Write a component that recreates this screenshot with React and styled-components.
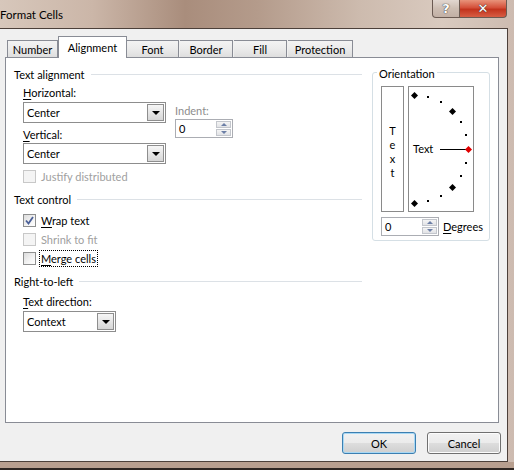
import React from "react"
import styled, { createGlobalStyle } from "styled-components"

const GlobalStyle = createGlobalStyle`
  html, body {
    margin: 0;
    padding: 0;
    background: #fff;
  }
  body {
    font-family: Lato, "Noto Sans", sans-serif;
    font-size: 11px;
    color: #000;
  }
`

const Window = styled.div`
  width: 514px;
  height: 470px;
  overflow: hidden;
  display: flex;
  flex-direction: column;
  background: linear-gradient(
    90deg,
    #d7c7bb 0%,
    #cbb6a8 18%,
    #a98d7c 36%,
    #b49b8b 50%,
    #cdbbae 70%,
    #d9cabf 86%,
    #cdbbb0 100%
  );
`

const TitleBar = styled.div`
  height: 28px;
  flex: none;
  display: flex;
  align-items: flex-start;
`

const Title = styled.div`
  margin-top: 7px;
  font-size: 11.5px;
  line-height: 15px;
  color: #000;
`

const CaptionButtons = styled.div`
  margin-left: auto;
  margin-right: 7px;
  display: flex;
  height: 18px;
`

const CaptionButton = styled.div`
  width: ${p => p.$w}px;
  height: 18px;
  box-sizing: border-box;
  border: 1px solid #6b5a52;
  border-top: none;
  display: flex;
  align-items: center;
  justify-content: center;
  font-family: "DejaVu Sans", sans-serif;
  font-weight: bold;
  font-size: 13px;
  color: #fff;
  text-shadow: 0 0 1px #333, 0 0 1px #333;
  background: ${p =>
    p.$close
      ? "linear-gradient(180deg, #e8937b 0%, #d4503a 45%, #c2331d 55%, #d75d44 100%)"
      : "linear-gradient(180deg, #e2d7d0 0%, #cdbdb2 50%, #c2b0a5 100%)"};
  border-radius: ${p => (p.$close ? "0 0 4px 0" : "0 0 0 4px")};
  border-left: ${p => (p.$close ? "none" : "1px solid #6b5a52")};
`

const Client = styled.div`
  height: 434px;
  margin-right: 6px;
  flex: none;
  background: #f0f0f0;
  border-top: 1px solid #4c403a;
  border-right: 1px solid #4c403a;
  border-bottom: 1px solid #4c403a;
  box-sizing: border-box;
  display: flex;
  flex-direction: column;
`

const BottomFrame = styled.div`
  flex: 1;
  background: #b89f8f;
  border-bottom: 2px solid #2e2622;
`

const TabStrip = styled.div`
  display: flex;
  align-items: flex-end;
  height: 21px;
  margin-top: 7px;
  padding-left: 7px;
  position: relative;
  z-index: 1;
`

const Tab = styled.div`
  box-sizing: border-box;
  width: ${p => p.$w}px;
  margin-right: ${p => p.$gap || 0}px;
  height: ${p => (p.$active ? 22 : 17)}px;
  margin-bottom: ${p => (p.$active ? -1 : 0)}px;
  border: 1px solid #898c95;
  border-bottom: none;
  border-left: ${p => (p.$first || p.$active ? "1px solid #898c95" : "none")};
  background: ${p =>
    p.$active ? "#fff" : "linear-gradient(180deg, #f3f3f3 0%, #ebebeb 50%, #dedede 100%)"};
  display: flex;
  justify-content: center;
  padding-top: ${p => (p.$active ? 3 : 1)}px;
  line-height: 15px;
`

const Panel = styled.div`
  margin-left: 5px;
  width: 494px;
  height: 366px;
  box-sizing: border-box;
  border: 1px solid #898c95;
  background: #fff;
  display: flex;
  align-items: flex-start;
`

const LeftColumn = styled.div`
  width: 356px;
  padding-left: 8px;
  box-sizing: border-box;
  display: flex;
  flex-direction: column;
  padding-top: 9px;
`

const SectionHeader = styled.div`
  display: flex;
  align-items: center;
  gap: 6px;
  height: 15px;
  margin-top: ${p => p.$mt || 0}px;
  white-space: nowrap;

  &::after {
    content: "";
    flex: 1;
    height: 1px;
    background: #dce1e6;
  }
`

const Field = styled.div`
  padding-left: 9px;
  display: flex;
  flex-direction: column;
`

const Label = styled.div`
  height: 15px;
  line-height: 15px;
  margin-top: ${p => p.$mt || 0}px;
  color: ${p => (p.$disabled ? "#8d8d8d" : "#000")};
`

const U = styled.span`
  text-decoration: underline;
  text-underline-offset: 2px;
`

const AlignRow = styled.div`
  display: flex;
`

const Selects = styled.div`
  display: flex;
  flex-direction: column;
`

const IndentColumn = styled.div`
  margin-left: 9px;
  padding-top: 21px;
  display: flex;
  flex-direction: column;
`

const Select = styled.div`
  width: ${p => p.$w}px;
  height: 21px;
  margin-top: ${p => p.$mt || 0}px;
  box-sizing: border-box;
  border: 1px solid #8d8d8d;
  background: #fff;
  display: flex;
  align-items: stretch;
`

const SelectText = styled.div`
  flex: 1;
  padding-left: 3px;
  line-height: 19px;
`

const DropButton = styled.div`
  width: 17px;
  margin: 1px;
  box-sizing: border-box;
  border: 1px solid #8e8e8e;
  background: linear-gradient(180deg, #f6f6f6 0%, #e6e6e6 50%, #d6d6d6 100%);
  display: flex;
  align-items: center;
  justify-content: center;

  &::before {
    content: "";
    border-left: 4px solid transparent;
    border-right: 4px solid transparent;
    border-top: 4px solid #000;
  }
`

const Spin = styled.div`
  width: 58px;
  height: 19px;
  margin-top: ${p => p.$mt || 0}px;
  box-sizing: border-box;
  border: 1px solid #abadb3;
  background: #fff;
  display: flex;
`

const SpinText = styled.div`
  flex: 1;
  padding-left: 3px;
  line-height: 17px;
`

const SpinButtons = styled.div`
  width: 15px;
  display: flex;
  flex-direction: column;
  gap: 1px;
  padding: 1px 1px 1px 0;
`

const SpinArrow = styled.div`
  flex: 1;
  box-sizing: border-box;
  border: 1px solid #c3c6cc;
  background: linear-gradient(180deg, #f4f4f4, #e2e3e6);
  display: flex;
  align-items: center;
  justify-content: center;

  &::before {
    content: "";
    border-left: 3px solid transparent;
    border-right: 3px solid transparent;
    ${p =>
      p.$up ? "border-bottom: 3px solid #6c7fa6;" : "border-top: 3px solid #6c7fa6;"}
  }
`

const CheckRow = styled.div`
  display: flex;
  align-items: center;
  gap: 4px;
  height: 15px;
  margin-top: ${p => p.$mt || 0}px;
  padding-left: 9px;
  color: ${p => (p.$disabled ? "#a0a0a0" : "#000")};
`

const Box = styled.div`
  width: 13px;
  height: 13px;
  box-sizing: border-box;
  border: 1px solid ${p => (p.$disabled ? "#c8c8c8" : "#8e8f8f")};
  background: ${p =>
    p.$disabled ? "#f4f4f4" : "linear-gradient(135deg, #dcdcdc 0%, #f4f4f4 60%, #ffffff 100%)"};
  display: flex;
  align-items: center;
  justify-content: center;
`

const CheckText = styled.span`
  padding: 0 1px;
  line-height: 15px;
  outline: ${p => (p.$focus ? "1px dotted #000" : "none")};
  outline-offset: 0;
`

const Orientation = styled.div`
  position: relative;
  margin-left: 10px;
  margin-top: 14px;
  width: 118px;
  height: 169px;
  box-sizing: border-box;
  border: 1px solid #d5dfe5;
  border-radius: 3px;
  padding: 13px 0 0 8px;
`

const Legend = styled.div`
  position: absolute;
  top: -7px;
  left: 4px;
  padding: 0 2px;
  background: #fff;
  line-height: 15px;
`

const OrientRow = styled.div`
  display: flex;
  gap: 4px;
`

const VerticalBox = styled.div`
  width: 23px;
  height: 126px;
  box-sizing: border-box;
  border: 1px solid #8a8a8a;
  display: flex;
  flex-direction: column;
  align-items: center;
  justify-content: center;
  padding-top: 5px;
  line-height: 14px;
`

const Dial = styled.div`
  position: relative;
  width: 66px;
  height: 126px;
  box-sizing: border-box;
  border: 1px solid #8a8a8a;

  svg {
    display: block;
  }
`

const DialLabel = styled.span`
  position: absolute;
  left: 4px;
  top: 54px;
  line-height: 15px;
`

const DegreesRow = styled.div`
  display: flex;
  align-items: center;
  gap: 4px;
  margin-top: 5px;
`

const Footer = styled.div`
  display: flex;
  justify-content: flex-end;
  gap: 11px;
  padding-right: 6px;
  margin-top: 9px;
`

const Button = styled.div`
  width: 74px;
  height: 22px;
  box-sizing: border-box;
  border-radius: 3px;
  border: 1px solid ${p => (p.$default ? "#3c7fb1" : "#707070")};
  box-shadow: ${p => (p.$default ? "inset 0 0 0 1px #a8d8f4" : "inset 0 0 0 1px #fcfcfc")};
  background: linear-gradient(180deg, #f2f2f2 0%, #ebebeb 48%, #dddddd 52%, #cfcfcf 100%);
  display: flex;
  align-items: center;
  justify-content: center;
`

function Diamond({ x, y, s = 3.5, fill = "#000" }) {
  return <polygon points={`${x},${y - s} ${x + s},${y} ${x},${y + s} ${x - s},${y}`} fill={fill} />
}

function DialDrawing() {
  const cx = 5
  const cy = 62
  const r = 54
  const small = [75, 60, 30, 15, -15, -30, -60, -75]
  const big = [90, 45, -45, -90]
  const pt = a => [cx + r * Math.cos((a * Math.PI) / 180), cy - r * Math.sin((a * Math.PI) / 180)]
  return (
    <svg width="64" height="124" viewBox="0 0 64 124">
      {small.map(a => {
        const [x, y] = pt(a)
        return <rect key={a} x={Math.round(x) - 1} y={Math.round(y) - 1} width="2" height="2" fill="#000" />
      })}
      {big.map(a => {
        const [x, y] = pt(a)
        return <Diamond key={a} x={Math.round(x) + 0.5} y={Math.round(y) + 0.5} />
      })}
      <line x1="31" y1="62.5" x2="57" y2="62.5" stroke="#000" strokeWidth="1" />
      <Diamond x={59.5} y={62.5} fill="#e00000" />
    </svg>
  )
}

function SpinBox({ value, mt }) {
  return (
    <Spin $mt={mt}>
      <SpinText>{value}</SpinText>
      <SpinButtons>
        <SpinArrow $up />
        <SpinArrow />
      </SpinButtons>
    </Spin>
  )
}

function Dropdown({ value, w, mt }) {
  return (
    <Select $w={w} $mt={mt}>
      <SelectText>{value}</SelectText>
      <DropButton />
    </Select>
  )
}

function Check({ checked, disabled, focus, mt, children }) {
  return (
    <CheckRow $mt={mt} $disabled={disabled}>
      <Box $disabled={disabled}>
        {checked && (
          <svg width="9" height="9" viewBox="0 0 9 9">
            <path d="M1 4.5 L3.5 7.5 L8 1" fill="none" stroke="#4a5f97" strokeWidth="1.8" />
          </svg>
        )}
      </Box>
      <CheckText $focus={focus}>{children}</CheckText>
    </CheckRow>
  )
}

const tabs = [
  { name: "Number", w: 51, first: true },
  { name: "Alignment", w: 69, active: true },
  { name: "Font", w: 52, gap: 1 },
  { name: "Border", w: 53, gap: 1 },
  { name: "Fill", w: 53, gap: 1 },
  { name: "Protection", w: 65 },
]

export default function App() {
  return (
    <>
      <GlobalStyle />
      <Window>
        <TitleBar>
          <Title>Format Cells</Title>
          <CaptionButtons>
            <CaptionButton $w={28}>?</CaptionButton>
            <CaptionButton $w={47} $close>✕</CaptionButton>
          </CaptionButtons>
        </TitleBar>
        <Client>
          <TabStrip>
            {tabs.map(t => (
              <Tab key={t.name} $w={t.w} $gap={t.gap} $active={t.active} $first={t.first}>
                {t.name}
              </Tab>
            ))}
          </TabStrip>
          <Panel>
            <LeftColumn>
              <SectionHeader>Text alignment</SectionHeader>
              <Field>
                <AlignRow>
                  <Selects>
                    <Label $mt={3}>
                      <U>H</U>orizontal:
                    </Label>
                    <Dropdown value="Center" w={143} mt={2} />
                    <Label $mt={4}>
                      <U>V</U>ertical:
                    </Label>
                    <Dropdown value="Center" w={143} mt={1} />
                  </Selects>
                  <IndentColumn>
                    <Label $disabled>Indent:</Label>
                    <SpinBox value="0" mt={1} />
                  </IndentColumn>
                </AlignRow>
              </Field>
              <Check disabled mt={5}>
                Justify distributed
              </Check>
              <SectionHeader $mt={8}>Text control</SectionHeader>
              <Check checked mt={6}>
                <U>W</U>rap text
              </Check>
              <Check disabled mt={4}>
                Shrink to fit
              </Check>
              <Check focus mt={4}>
                <U>M</U>erge cells
              </Check>
              <SectionHeader $mt={8}>Right-to-left</SectionHeader>
              <Field>
                <Label $mt={5}>
                  <U>T</U>ext direction:
                </Label>
                <Dropdown value="Context" w={93} mt={2} />
              </Field>
            </LeftColumn>
            <Orientation>
              <Legend>Orientation</Legend>
              <OrientRow>
                <VerticalBox>
                  <span>T</span>
                  <span>e</span>
                  <span>x</span>
                  <span>t</span>
                </VerticalBox>
                <Dial>
                  <DialDrawing />
                  <DialLabel>Text</DialLabel>
                </Dial>
              </OrientRow>
              <DegreesRow>
                <SpinBox value="0" />
                <span>
                  <U>D</U>egrees
                </span>
              </DegreesRow>
            </Orientation>
          </Panel>
          <Footer>
            <Button $default>OK</Button>
            <Button>Cancel</Button>
          </Footer>
        </Client>
        <BottomFrame />
      </Window>
    </>
  )
}
